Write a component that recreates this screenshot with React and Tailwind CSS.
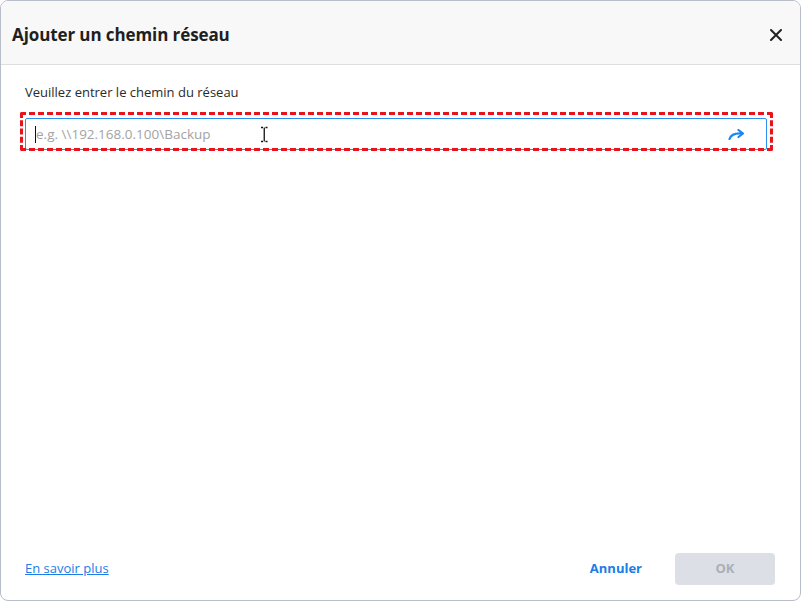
export default function App() {
  return (
    <div className="w-[801px] h-[601px] bg-white" style={{ fontFamily: '"Open Sans", "Noto Sans", sans-serif' }}>
      <div className="w-[801px] h-[601px] border border-[#b9bdc7] rounded-[8px] flex flex-col overflow-hidden bg-white">
        {/* Header */}
        <div className="h-[64px] shrink-0 bg-[#f8f8f8] border-b border-[#dedede] flex items-center justify-between pl-[11px] pr-[14px] pt-[5px]">
          <h1 className="text-[17px] font-bold text-[#1f1f1f] tracking-[-0.1px]">Ajouter un chemin réseau</h1>
          <button className="w-[20px] h-[20px] flex items-center justify-center text-[#222]">
            <svg width="12" height="12" viewBox="0 0 12 12">
              <path d="M1 1 L11 11 M11 1 L1 11" stroke="currentColor" strokeWidth="2" strokeLinecap="round" />
            </svg>
          </button>
        </div>

        {/* Body */}
        <div className="flex-1 px-[24px] pt-[18px]">
          <p className="text-[13px] text-[#2a2a2a] leading-[18px]">Veuillez entrer le chemin du réseau</p>
          <div className="relative mt-[17px] w-[742px] h-[32px] border border-[#2b8ef0] rounded-[2px] flex items-center pl-[9px] pr-[21px]">
            <span className="w-px h-[17px] bg-[#111]" />
            <span className="text-[13.5px] text-[#a3a3a3]">e.g. \\192.168.0.100\Backup</span>
            <svg className="absolute left-[234px] top-[7px]" width="9" height="17" viewBox="0 0 9 17">
              <path d="M1 1.5 H3 M5.5 1.5 H7.5 M4.25 1.5 V15.5 M1 15.5 H3 M5.5 15.5 H7.5" stroke="#111" strokeWidth="1.3" fill="none" />
            </svg>
            <div className="flex-1" />
            <svg width="17" height="11" viewBox="0 0 17 11">
              <path d="M1.5 10 C 3 5.5, 7 4, 14 4.5" stroke="#1a85ef" strokeWidth="2.2" fill="none" strokeLinecap="round" />
              <path d="M10.5 1 L15 4.5 L10.5 8" stroke="#1a85ef" strokeWidth="2.2" fill="none" strokeLinecap="round" strokeLinejoin="round" />
            </svg>
            {/* highlight */}
            <div className="absolute -left-[6px] -top-[7px] w-[753px] h-[39px] border-[3px] border-dashed border-[#e8131b] rounded-[2px] pointer-events-none" />
          </div>
        </div>

        {/* Footer */}
        <div className="h-[64px] shrink-0 flex items-start justify-between pl-[24px] pr-[25px] pt-[17px]">
          <a href="#" className="mt-[6px] text-[13px] text-[#1a7de8] underline">En savoir plus</a>
          <div className="flex items-center gap-[33px]">
            <button className="text-[13px] font-bold text-[#1a7de8]">Annuler</button>
            <button className="w-[100px] h-[32px] rounded-[4px] bg-[#dcdfe6] text-[13px] font-bold text-[#a9afb9]">OK</button>
          </div>
        </div>
      </div>
    </div>
  );
}
